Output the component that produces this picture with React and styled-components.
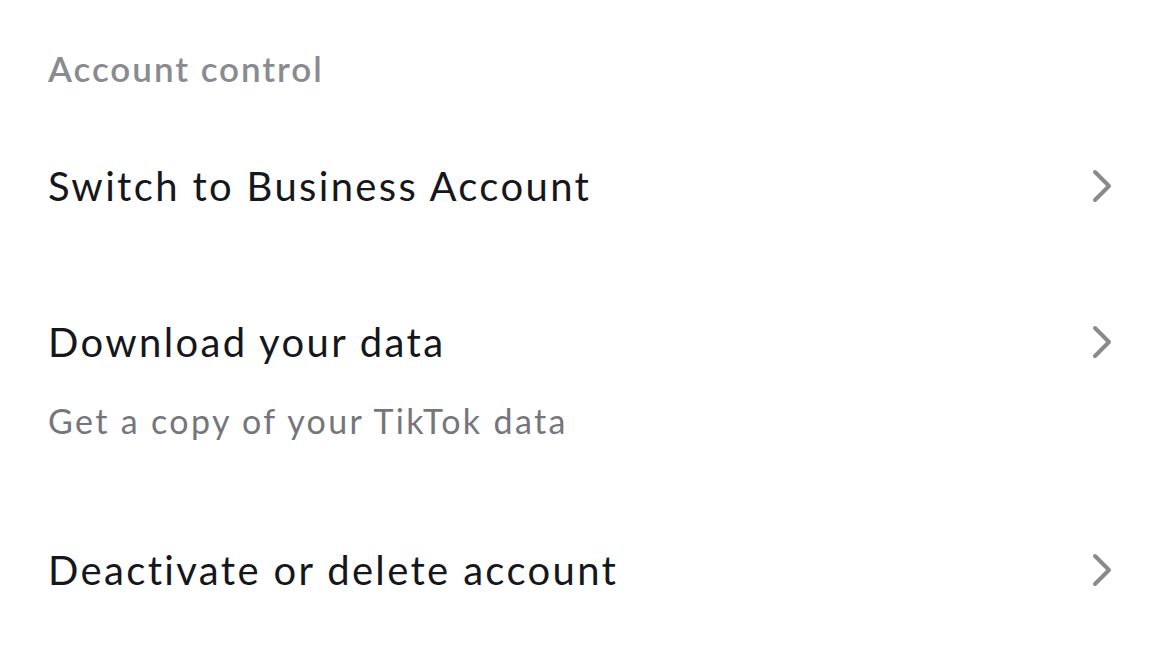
import styled, { createGlobalStyle } from "styled-components";

const GlobalStyle = createGlobalStyle`
  body {
    margin: 0;
    background: #ffffff;
    font-family: Lato, "Noto Sans", sans-serif;
  }
`;

const Page = styled.div`
  width: 1170px;
  height: 660px;
  background: #ffffff;
  padding: 45px 0 0 48px;
  box-sizing: border-box;
  overflow: hidden;
`;

const SectionTitle = styled.div`
  font-size: 35px;
  font-weight: 600;
  letter-spacing: 1.95px;
  color: #8a8b91;
  line-height: 46px;
  margin-bottom: 71px;
`;

const Row = styled.div`
  display: flex;
  align-items: flex-start;
  justify-content: space-between;
  padding-right: 56px;
  margin-bottom: ${(p) => p.$gap}px;
`;

const Texts = styled.div`
  display: flex;
  flex-direction: column;
  gap: 33px;
`;

const Label = styled.div`
  font-size: 40px;
  letter-spacing: 2.35px;
  color: #16171c;
  line-height: 48px;
`;

const Sub = styled.div`
  font-size: 34px;
  letter-spacing: 2.35px;
  color: #75767c;
  line-height: 44px;
`;

const Chevron = styled.svg`
  width: 24px;
  height: 36px;
  margin-top: 6px;
  flex-shrink: 0;
`;

const Arrow = () => (
  <Chevron viewBox="0 0 24 36">
    <path
      d="M5 4 L19 18 L5 32"
      fill="none"
      stroke="#8a8a8e"
      strokeWidth="4"
      strokeLinecap="round"
      strokeLinejoin="round"
    />
  </Chevron>
);

const items = [
  { label: "Switch to Business Account", gap: 108 },
  { label: "Download your data", sub: "Get a copy of your TikTok data", gap: 103 },
  { label: "Deactivate or delete account", gap: 0 },
];

export default function App() {
  return (
    <Page>
      <GlobalStyle />
      <SectionTitle>Account control</SectionTitle>
      {items.map((it) => (
        <Row key={it.label} $gap={it.gap}>
          <Texts>
            <Label>{it.label}</Label>
            {it.sub && <Sub>{it.sub}</Sub>}
          </Texts>
          <Arrow />
        </Row>
      ))}
    </Page>
  );
}
